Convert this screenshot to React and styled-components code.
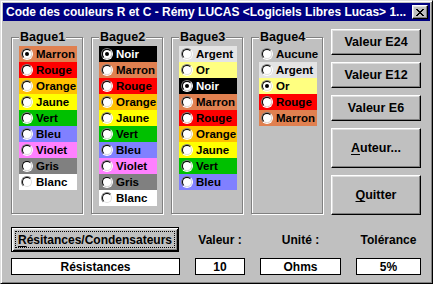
import styled, { createGlobalStyle } from "styled-components";

const GlobalStyle = createGlobalStyle`
  html, body {
    margin: 0;
    padding: 0;
    background: #c0c0c0;
  }
  body {
    font-family: "Liberation Sans", Arial, sans-serif;
  }
`;

const Window = styled.div`
  box-sizing: border-box;
  width: 433px;
  height: 284px;
  background: #c0c0c0;
  border: 1px solid;
  border-color: #dfdfdf #000 #000 #dfdfdf;
  box-shadow: inset 1px 1px #fff, inset -1px -1px #808080;
  padding: 2px;
  display: flex;
  flex-direction: column;
`;

const TitleBar = styled.div`
  height: 18px;
  flex: none;
  background: #000080;
  display: flex;
  align-items: center;
  justify-content: space-between;
  padding: 0 2px 0 3px;
`;

const TitleText = styled.div`
  color: #fff;
  font-weight: bold;
  font-size: 12px;
  white-space: nowrap;
  overflow: hidden;
`;

const CloseButton = styled.div`
  box-sizing: border-box;
  width: 16px;
  height: 14px;
  flex: none;
  background: #c0c0c0;
  border: 1px solid;
  border-color: #fff #000 #000 #fff;
  box-shadow: inset -1px -1px #808080, inset 1px 1px #dfdfdf;
  display: flex;
  align-items: center;
  justify-content: center;
`;

const Body = styled.div`
  flex: 1;
  padding: 0 8px;
`;

const TopRow = styled.div`
  display: flex;
  gap: 8px;
  align-items: flex-start;
`;

const Group = styled.fieldset`
  box-sizing: border-box;
  width: 72px;
  height: 184px;
  margin: 9px 0 0 0;
  padding: 2px 0 0 7px;
  min-width: 0;
  border: 1px solid #808080;
  box-shadow: inset 1px 1px #fff, 1px 1px #fff;
`;

const Legend = styled.legend`
  padding: 0 1px;
  margin: 0;
  font-size: 12.5px;
  line-height: 14px;
  font-weight: bold;
  background: #c0c0c0;
  color: #000;
`;

const Row = styled.label`
  width: 58px;
  height: 16px;
  display: flex;
  align-items: center;
  gap: 3px;
  padding-left: 2px;
  box-sizing: border-box;
  background: ${(p) => p.$bg || "transparent"};
  color: ${(p) => p.$fg || "#000"};
  font-size: 11.5px;
  font-weight: bold;
  white-space: nowrap;
`;

const RadioOuter = styled.span`
  box-sizing: border-box;
  width: 12px;
  height: 12px;
  flex: none;
  border-radius: 50%;
  border: 1px solid;
  border-color: #808080 #fff #fff #808080;
  display: flex;
`;

const RadioInner = styled.span`
  box-sizing: border-box;
  flex: 1;
  border-radius: 50%;
  border: 1px solid;
  border-color: #000 #dfdfdf #dfdfdf #000;
  background: #fff;
  display: flex;
  align-items: center;
  justify-content: center;
`;

const Dot = styled.span`
  width: 4px;
  height: 4px;
  border-radius: 50%;
  background: #000;
`;

const ButtonColumn = styled.div`
  margin-top: 8px;
  display: flex;
  flex-direction: column;
  gap: 7px;
`;

const Button = styled.div`
  box-sizing: border-box;
  width: ${(p) => p.$w || 90}px;
  height: ${(p) => p.$h || 26}px;
  background: #c0c0c0;
  border: 1px solid;
  border-color: #fff #000 #000 #fff;
  box-shadow: inset -1px -1px #808080, inset 1px 1px #dfdfdf;
  display: flex;
  align-items: center;
  justify-content: center;
  font-size: 12.5px;
  font-weight: bold;
  color: #000;
  white-space: nowrap;
`;

const DefaultButton = styled(Button)`
  border-color: #000;
  box-shadow: inset 1px 1px #fff, inset -1px -1px #000, inset 2px 2px #dfdfdf,
    inset -2px -2px #808080;
  padding: 2px;
`;

const FocusRing = styled.span`
  flex: 1;
  align-self: stretch;
  margin: 1px;
  border: 1px dotted #000;
  display: flex;
  align-items: center;
  justify-content: center;
  font-size: 12px;
`;

const BottomGrid = styled.div`
  margin-top: 12px;
  display: grid;
  grid-template-columns: 169px 50px 81px 65px;
  grid-template-rows: 25px 17px;
  column-gap: 15px;
  row-gap: 6px;
`;

const FieldLabel = styled.div`
  display: flex;
  align-items: center;
  justify-content: center;
  font-size: 12px;
  font-weight: bold;
  color: #000;
`;

const Output = styled.div`
  box-sizing: border-box;
  background: #fff;
  border: 1px solid #000;
  display: flex;
  align-items: center;
  justify-content: center;
  font-size: 12px;
  font-weight: bold;
  color: #000;
`;

const Under = styled.u`
  text-decoration-thickness: 1px;
  text-underline-offset: 2px;
`;

const colors = {
  Aucune: null,
  Argent: "#e4e4e4",
  Or: "#ffff80",
  Noir: "#000000",
  Marron: "#e08050",
  Rouge: "#ff0000",
  Orange: "#ffc000",
  Jaune: "#ffff00",
  Vert: "#00c000",
  Bleu: "#8080ff",
  Violet: "#ff80ff",
  Gris: "#808080",
  Blanc: "#ffffff",
};

const groups = [
  {
    title: "Bague1",
    items: ["Marron", "Rouge", "Orange", "Jaune", "Vert", "Bleu", "Violet", "Gris", "Blanc"],
    checked: "Marron",
  },
  {
    title: "Bague2",
    items: ["Noir", "Marron", "Rouge", "Orange", "Jaune", "Vert", "Bleu", "Violet", "Gris", "Blanc"],
    checked: "Noir",
  },
  {
    title: "Bague3",
    items: ["Argent", "Or", "Noir", "Marron", "Rouge", "Orange", "Jaune", "Vert", "Bleu"],
    checked: "Noir",
  },
  {
    title: "Bague4",
    items: ["Aucune", "Argent", "Or", "Rouge", "Marron"],
    checked: "Or",
  },
];

const Radio = ({ checked }) => (
  <RadioOuter>
    <RadioInner>{checked && <Dot />}</RadioInner>
  </RadioOuter>
);

const CloseIcon = () => (
  <svg width="8" height="7" viewBox="0 0 8 7" shapeRendering="crispEdges">
    <path
      d="M0 0h2v1h-2zM6 0h2v1h-2zM1 1h2v1h-2zM5 1h2v1h-2zM2 2h4v1h-4zM3 3h2v1h-2zM2 4h4v1h-4zM1 5h2v1h-2zM5 5h2v1h-2zM0 6h2v1h-2zM6 6h2v1h-2z"
      fill="#000"
    />
  </svg>
);

const App = () => {
  return (
    <>
      <GlobalStyle />
      <Window>
        <TitleBar>
          <TitleText>
            Code des couleurs R et C - Rémy LUCAS &lt;Logiciels Libres Lucas&gt; 1...
          </TitleText>
          <CloseButton>
            <CloseIcon />
          </CloseButton>
        </TitleBar>
        <Body>
          <TopRow>
            {groups.map((g) => (
              <Group key={g.title}>
                <Legend>{g.title}</Legend>
                {g.items.map((name) => (
                  <Row
                    key={name}
                    $bg={colors[name]}
                    $fg={name === "Noir" ? "#fff" : "#000"}
                  >
                    <Radio checked={g.checked === name} />
                    {name}
                  </Row>
                ))}
              </Group>
            ))}
            <ButtonColumn>
              <Button>Valeur E24</Button>
              <Button>Valeur E12</Button>
              <Button>Valeur E6</Button>
              <Button $h={40}>
                <span>
                  <Under>A</Under>uteur...
                </span>
              </Button>
              <Button $h={40}>
                <span>
                  <Under>Q</Under>uitter
                </span>
              </Button>
            </ButtonColumn>
          </TopRow>
          <BottomGrid>
            <DefaultButton $w={168} $h={25}>
              <FocusRing>
                <span>
                  <Under>R</Under>ésitances/Condensateurs
                </span>
              </FocusRing>
            </DefaultButton>
            <FieldLabel>Valeur :</FieldLabel>
            <FieldLabel>Unité :</FieldLabel>
            <FieldLabel>Tolérance</FieldLabel>
            <Output>Résistances</Output>
            <Output>10</Output>
            <Output>Ohms</Output>
            <Output>5%</Output>
          </BottomGrid>
        </Body>
      </Window>
    </>
  );
};

export default App;
